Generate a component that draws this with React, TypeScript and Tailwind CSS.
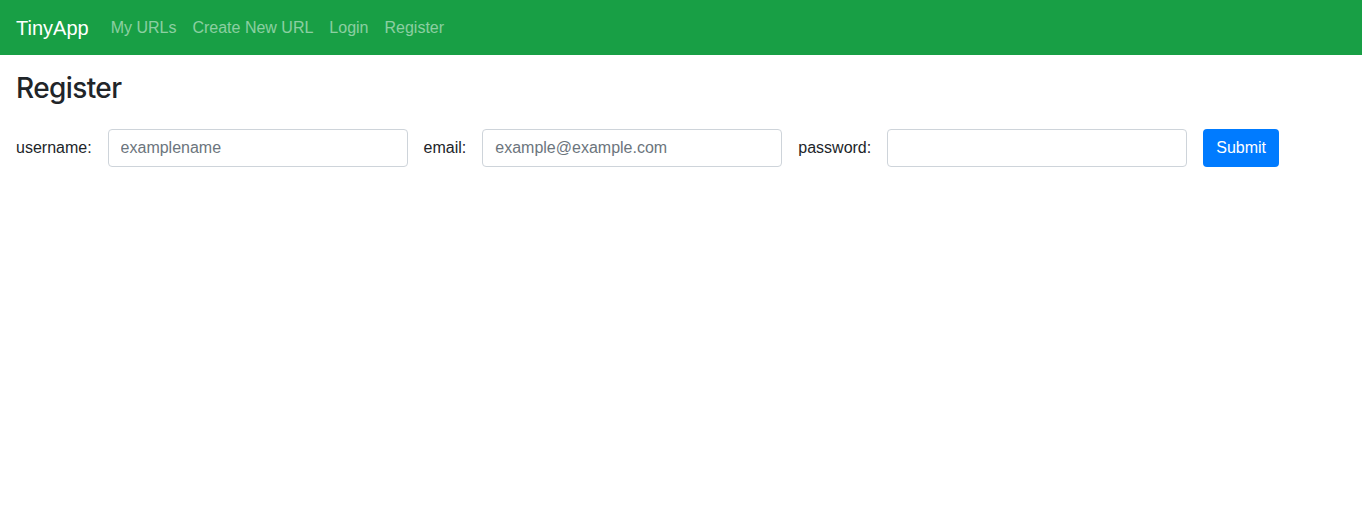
import React from 'react';

export default function App() {
  const links = ['My URLs', 'Create New URL', 'Login', 'Register'];

  return (
    <div className="min-h-screen bg-white text-[#212529]" style={{ fontFamily: '"Liberation Sans", Arial, sans-serif' }}>
      {/* Navbar */}
      <nav className="h-[55px] bg-[#189f45] flex items-center px-4">
        <span className="text-[20px] text-white mr-[14px]">TinyApp</span>
        <ul className="flex items-center">
          {links.map((l) => (
            <li key={l}>
              <a href="#" className="px-2 text-base text-white/50">
                {l}
              </a>
            </li>
          ))}
        </ul>
      </nav>

      {/* Register form */}
      <main className="px-4">
        <h3 className="text-[28px] font-medium leading-[1.2] mt-[17px] mb-[23px] tracking-[-0.6px]" style={{ fontFamily: 'Inter, "Liberation Sans", sans-serif' }}>
          Register
        </h3>
        <form className="flex items-center gap-4" onSubmit={(e) => e.preventDefault()}>
          <label htmlFor="username" className="text-base">username:</label>
          <input
            id="username"
            type="text"
            placeholder="examplename"
            className="w-[300px] h-[38px] px-3 border border-[#ced4da] rounded text-base placeholder-[#6c757d] focus:outline-none"
          />
          <label htmlFor="email" className="text-base">email:</label>
          <input
            id="email"
            type="email"
            placeholder="example@example.com"
            className="w-[300px] h-[38px] px-3 border border-[#ced4da] rounded text-base placeholder-[#6c757d] focus:outline-none"
          />
          <label htmlFor="password" className="text-base">password:</label>
          <input
            id="password"
            type="password"
            className="w-[300px] h-[38px] px-3 border border-[#ced4da] rounded text-base focus:outline-none"
          />
          <button type="submit" className="h-[38px] px-[13px] bg-[#007bff] text-white text-base rounded">
            Submit
          </button>
        </form>
      </main>
    </div>
  );
}
